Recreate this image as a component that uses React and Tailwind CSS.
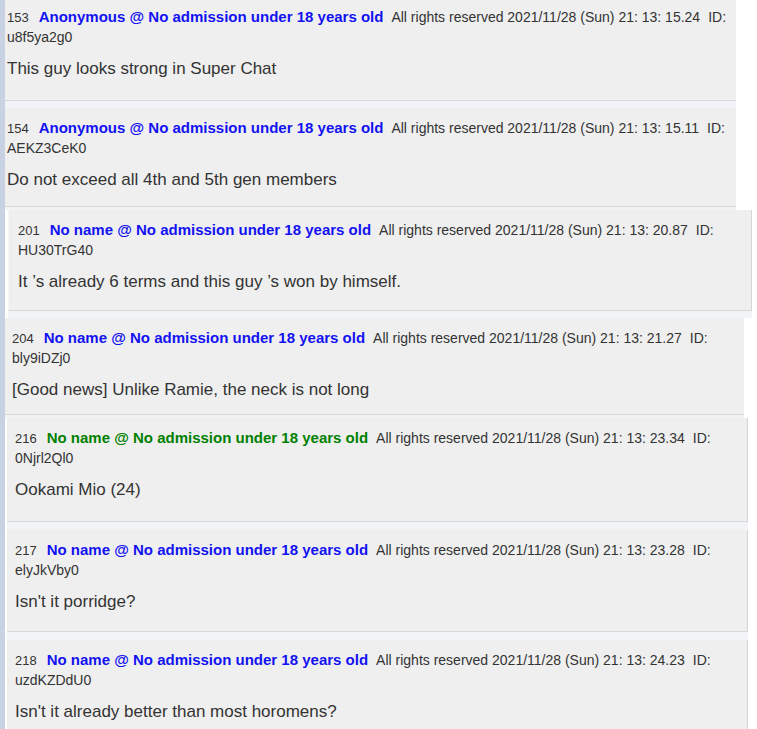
import React from 'react';

const posts = [
  {
    no: 153, name: 'Anonymous @ No admission under 18 years old', color: 'text-[#1212f2]',
    time: '21: 13: 15.24', id: 'u8f5ya2g0', body: 'This guy looks strong in Super Chat',
    wrap: 'ml-0 w-[731px]', box: 'pl-[2px] pt-[7px] pb-[21px]', gap: 'h-[7px]',
  },
  {
    no: 154, name: 'Anonymous @ No admission under 18 years old', color: 'text-[#1212f2]',
    time: '21: 13: 15.11', id: 'AEKZ3CeK0', body: 'Do not exceed all 4th and 5th gen members',
    wrap: 'ml-0 w-[731px]', box: 'pl-[2px] pt-[10px] pb-[16px]', gap: 'h-[3px]',
  },
  {
    no: 201, name: 'No name @ No admission under 18 years old', color: 'text-[#1212f2]',
    time: '21: 13: 20.87', id: 'HU30TrG40', body: 'It ’s already 6 terms and this guy ’s won by himself.',
    wrap: 'ml-[3px] w-[744px]', box: 'pl-[9px] pt-[10px] pb-[18px] border-l border-r border-l-[#f7f7f7] border-r-[#d6d6d6]', gap: 'h-[7px]',
  },
  {
    no: 204, name: 'No name @ No admission under 18 years old', color: 'text-[#1212f2]',
    time: '21: 13: 21.27', id: 'bly9iDZj0', body: '[Good news] Unlike Ramie, the neck is not long',
    wrap: 'ml-0 w-[739px]', box: 'pl-[7px] pt-[10px] pb-[14px]', gap: 'h-[3px]',
  },
  {
    no: 216, name: 'No name @ No admission under 18 years old', color: 'text-[#008000]',
    time: '21: 13: 23.34', id: '0Njrl2Ql0', body: 'Ookami Mio (24)',
    wrap: 'ml-[2px] w-[741px]', box: 'pl-[8px] pt-[10px] pb-[21px] border-r border-r-[#d6d6d6]', gap: 'h-[8px]',
  },
  {
    no: 217, name: 'No name @ No admission under 18 years old', color: 'text-[#1212f2]',
    time: '21: 13: 23.28', id: 'elyJkVby0', body: "Isn't it porridge?",
    wrap: 'ml-[2px] w-[741px]', box: 'pl-[8px] pt-[10px] pb-[19px] border-r border-r-[#d6d6d6]', gap: 'h-[8px]',
  },
  {
    no: 218, name: 'No name @ No admission under 18 years old', color: 'text-[#1212f2]',
    time: '21: 13: 24.23', id: 'uzdKZDdU0', body: "Isn't it already better than most horomens?",
    wrap: 'ml-[2px] w-[741px]', box: 'pl-[8px] pt-[10px] pb-[21px] border-r border-r-[#d6d6d6]', gap: 'h-[8px]',
  },
];

function Post({ p }) {
  return (
    <div className={p.wrap}>
      <div className={`bg-[#efefef] border-b border-b-[#d9d9d9] text-[#333] ${p.box}`}>
        <div className="h-[20px] flex items-baseline pt-[2px] text-[13px] leading-[16px] whitespace-nowrap">
          <span>{p.no}</span>
          <span className={`ml-[10px] text-[15px] font-bold ${p.color}`}>{p.name}</span>
          <span className="ml-[8px] text-[14px]">All rights reserved 2021/11/28 (Sun) {p.time}</span>
          <span className="ml-[8px] text-[14px]">ID:</span>
        </div>
        <div className="h-[20px] text-[14px] leading-[20px]">{p.id}</div>
        <div className="h-[20px] text-[17px] leading-[20px] mt-[12px] whitespace-nowrap">{p.body}</div>
      </div>
      <div className={`bg-[#f2f3f7] ${p.gap}`} />
    </div>
  );
}

export default function App() {
  return (
    <div className="flex min-h-[729px] bg-white font-['Liberation_Sans',Arial,sans-serif] overflow-hidden">
      <div className="w-[5px] shrink-0 bg-[#c9d2e3]" />
      <div className="flex-1">
        {posts.map((p) => (
          <Post key={p.no} p={p} />
        ))}
      </div>
    </div>
  );
}
